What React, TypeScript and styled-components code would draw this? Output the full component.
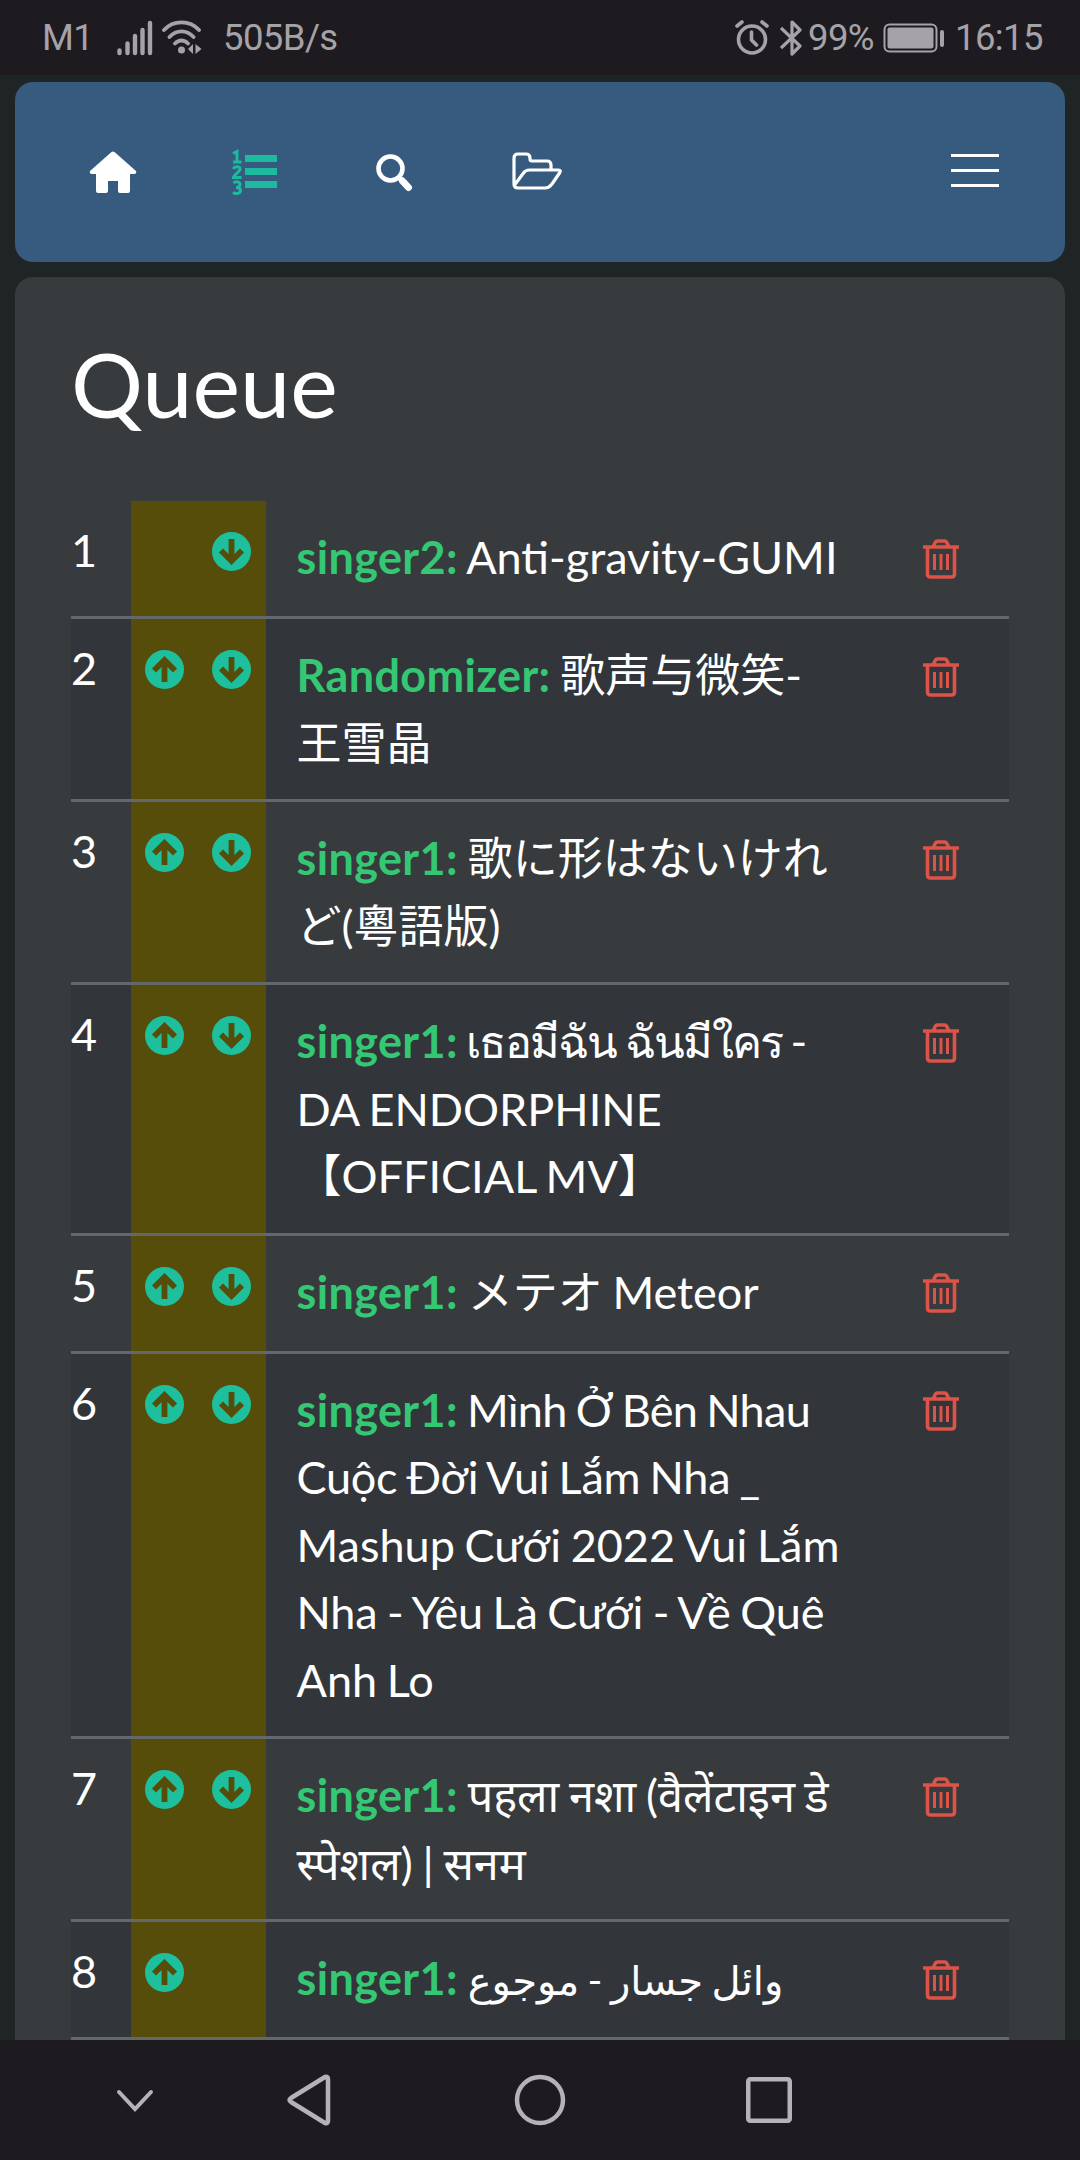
import React from "react";
import styled, { createGlobalStyle } from "styled-components";

const Global = createGlobalStyle`
  * { box-sizing: border-box; }
  html, body { margin: 0; background: #1f2425; }
`;

const Screen = styled.div`
  width: 1080px;
  height: 2160px;
  display: flex;
  flex-direction: column;
  overflow: hidden;
  background: #1f2425;
  color: #fff;
  font: 400 45px/67.5px Lato, "Noto Sans", "Noto Sans CJK JP", "DejaVu Sans", sans-serif;
  svg { display: block; flex: none; }
`;

const StatusBar = styled.header`
  height: 75px;
  flex: none;
  display: flex;
  justify-content: space-between;
  padding: 0 35px 0 42px;
  background: #1d1b20;
  color: #a5a3a8;
  font: 400 36.5px/75px Roboto, sans-serif;
  letter-spacing: -0.6px;
`;

const Group = styled.div`
  display: flex;
  align-items: center;
`;

const Label = styled.span<{ $left: number; $width: number }>`
  margin-left: ${(p) => p.$left}px;
  width: ${(p) => p.$width}px;
  white-space: nowrap;
`;

const Main = styled.main`
  flex: 1;
  min-height: 0;
  padding: 7px 15px 0;
  display: flex;
  flex-direction: column;
  gap: 15px;
`;

const Navbar = styled.nav`
  height: 180px;
  flex: none;
  display: flex;
  align-items: center;
  border-radius: 18px;
  padding: 0 66px 4px 74px;
  background: #375a7f;
`;

const NavItem = styled.a<{ $width: number; $drop: number; $active?: boolean }>`
  width: ${(p) => p.$width}px;
  padding-top: ${(p) => p.$drop * 2}px;
  color: ${(p) => (p.$active ? "#1dbaa0" : "#fff")};
`;

const Burger = styled.div`
  margin-left: auto;
  width: 48px;
  display: flex;
  flex-direction: column;
  gap: 12px;
`;

const BurgerLine = styled.span`
  height: 3px;
  background: #fff;
`;

const Panel = styled.section`
  flex: 1;
  min-height: 0;
  overflow: hidden;
  border-radius: 18px 18px 0 0;
  padding: 52px 56px 0;
  background: #373b3d;
`;

const Title = styled.h1`
  margin: 0 0 64px;
  font-size: 90px;
  font-weight: 400;
  line-height: 108px;
`;

const Row = styled.div<{ $striped: boolean }>`
  display: grid;
  grid-template-columns: 60px 135px 1fr 141px;
  min-height: 118px;
  border-bottom: 3px solid #63696b;
  background: ${(p) => (p.$striped ? "#32363a" : "transparent")};
`;

const Position = styled.div`
  padding: 16px 0 0;
`;

const Reorder = styled.div`
  display: grid;
  grid-template-columns: 67px 39px;
  align-content: start;
  padding: 31px 0 0 14px;
  background: #574d0a;
  color: #1dbf9c;
`;

const Song = styled.div`
  height: max-content;
  padding: 23px 0 22px 30.5px;
`;

const Line = styled.div<{ $tracking?: number }>`
  height: 67.5px;
  white-space: nowrap;
  word-spacing: -1.8px;
  letter-spacing: ${(p) => p.$tracking ?? 0}px;
`;

const Words = styled.span<{ $scale?: number }>`
  font-size: ${(p) => p.$scale ?? 1}em;
`;

const Singer = styled.b`
  color: #35c874;
  font-weight: 700;
  letter-spacing: 0.37px;
`;

const Remove = styled.div`
  padding: 37.5px 0 0 55px;
  color: #dd5347;
`;

const SystemNav = styled.footer`
  height: 120px;
  flex: none;
  display: flex;
  align-items: center;
  background: #1d1b20;
`;

const Signal = () => (
  <svg width="36" height="36" viewBox="0 0 36 36" stroke="currentColor" strokeWidth="4.4" strokeLinecap="round">
    <path d="M2.500 33v-2.500M10.500 33v-9.500M18 33v-17M25.500 33V10M33 33V3" />
  </svg>
);

const Wifi = () => (
  <svg width="40" height="36" viewBox="0 0 40 36" fill="none" stroke="currentColor" strokeWidth="3.8" strokeLinecap="round">
    <path d="M2 10C11-.3 28-.3 37 10M7.500 17c7-7.500 17-7.500 24 0M13 23.500c4-4 9-4 13 0" />
    <circle cx="19.500" cy="30" r="3.500" fill="currentColor" stroke="none" />
    <path d="M31 24v10l-5-5zM33.500 24v10l6-5z" fill="currentColor" stroke="none" />
  </svg>
);

const Alarm = () => (
  <svg width="34" height="36" viewBox="0 0 34 36" fill="none" stroke="currentColor" strokeWidth="3.6" strokeLinecap="round">
    <circle cx="17" cy="19.500" r="13.500" />
    <path d="M16.500 12v8l5 5M2 6l5-4M32 6l-5-4" />
  </svg>
);

const Bluetooth = () => (
  <svg width="22" height="36" viewBox="0 0 22 36" fill="none" stroke="currentColor" strokeWidth="3.2" strokeLinejoin="round">
    <path d="M1 8l19 18-8 8V2l8 8L1 28" />
  </svg>
);

const Battery = () => (
  <svg width="62" height="30" viewBox="0 0 62 30" fill="none" stroke="currentColor" strokeWidth="2">
    <rect x="1.500" y="1.500" width="52" height="27" rx="5" />
    <rect x="4.500" y="4.500" width="46" height="21" rx="2" fill="currentColor" stroke="none" />
    <rect x="57" y="7" width="4" height="17" rx="2" fill="currentColor" stroke="none" />
  </svg>
);

const Home = () => (
  <svg width="48" height="42" viewBox="0 0 48 42" fill="currentColor">
    <path d="M22.500 1q1.500-1 3 0L47 20q1 3-2 3h-4v17q0 2-2 2H31q-2 0-2-2V30H19v10q0 2-2 2H9q-2 0-2-2V23H3q-3 0-2-3z" />
  </svg>
);

const NumberedList = () => (
  <svg width="45" height="46" viewBox="0 0 45 46" fill="none" stroke="currentColor">
    <path d="M13 9.500h32M13 22.500h32M13 35.500h32" strokeWidth="7" />
    <path d="M1 4.500 5 2.500v11M1 13h8.500M1.500 20c1-3 6.500-3 6.500 0 0 3-6 5-6.500 8.500H9.500M1.500 34c2-2 6.500-1.500 6.500 1.500 0 2-2 3-4 3 3 0 4.500 1 4.500 3 0 3-5 4-7.500 2" strokeWidth="3" />
  </svg>
);

const Search = () => (
  <svg width="37" height="38" viewBox="0 0 37 38" fill="none" stroke="currentColor">
    <circle cx="14.500" cy="14.500" r="12" strokeWidth="4.600" />
    <path d="m23.500 24 9.500 9.500" strokeWidth="5" />
    <path d="m26.500 27 6 6.500" strokeWidth="7" strokeLinecap="round" />
  </svg>
);

const Folder = () => (
  <svg width="50" height="38" viewBox="0 0 50 38" fill="none" stroke="currentColor" strokeWidth="3.2" strokeLinejoin="round">
    <path d="M2 32V6q0-4 4-4h8q4 0 4 4v1q0 2 2 2h15q4 0 4 4v5M2.500 33l9-12q2-3 6-3h29q3 0 1 3L40 32q-3 4-7 4H6q-4 0-4-4" />
  </svg>
);

const Arrow = ({ down }: { down?: boolean }) => (
  <svg width="39" height="39" viewBox="0 0 39 39">
    <circle cx="19.500" cy="19.500" r="19.500" fill="currentColor" />
    <path
      transform={down ? "rotate(180 19.500 19.500)" : undefined}
      d="M19.500 32V11M9 20.500 19.500 10 30 20.500"
      fill="none"
      stroke="#574d0a"
      strokeWidth="5.800"
    />
  </svg>
);

const Trash = () => (
  <svg width="36" height="40" viewBox="0 0 36 40" fill="none" stroke="currentColor" strokeWidth="3.6" strokeLinejoin="round">
    <path d="M0 8h36M10 8l2.500-5q.5-1 2-1h7q1.500 0 2 1L26 8M4.500 8v27q0 3 3 3h21q3 0 3-3V8" />
    <path d="M11.500 15v16M18 15v16M24.500 15v16" strokeWidth="3" />
  </svg>
);

const Space = styled.span<{ $width: number }>`
  width: ${(p) => p.$width}px;
`;

type Entry = { singer: string; lines: string[]; lang?: string; tracking?: number[]; scale?: number };

const queue: Entry[] = [
  { singer: "singer2", lines: ["Anti-gravity-GUMI"] },
  { singer: "Randomizer", lines: ["歌声与微笑-", "王雪晶"], lang: "zh-CN" },
  { singer: "singer1", lines: ["歌に形はないけれ", "ど(粵語版)"], lang: "ja" },
  { singer: "singer1", lines: ["เธอมีฉัน ฉันมีใคร -", "DA ENDORPHINE", "【OFFICIAL MV】"], tracking: [-1.7] },
  { singer: "singer1", lines: ["メテオ Meteor"], lang: "ja" },
  {
    singer: "singer1",
    lines: ["Mình Ở Bên Nhau", "Cuộc Đời Vui Lắm Nha _", "Mashup Cưới 2022 Vui Lắm", "Nha - Yêu Là Cưới - Về Quê", "Anh Lo"],
    tracking: [-0.7, -0.3, 0, -0.15],
  },
  { singer: "singer1", lines: ["पहला नशा (वैलेंटाइन डे", "स्पेशल) | सनम"] },
  { singer: "singer1", lines: ["وائل جسار - موجوع"], scale: 0.89 },
];

export default function App() {
  return (
    <Screen>
      <Global />
      <StatusBar>
        <Group>
          <Label $left={0} $width={75}>M1</Label>
          <Signal />
          <Space $width={9} />
          <Wifi />
          <Label $left={21} $width={120}>505B/s</Label>
        </Group>
        <Group>
          <Alarm />
          <Space $width={11} />
          <Bluetooth />
          <Label $left={6} $width={75}>99%</Label>
          <Battery />
          <Label $left={10} $width={90}>16:15</Label>
        </Group>
      </StatusBar>
      <Main>
        <Navbar>
          <NavItem $width={143} $drop={2}><Home /></NavItem>
          <NavItem $width={144} $drop={2} $active><NumberedList /></NavItem>
          <NavItem $width={136} $drop={3}><Search /></NavItem>
          <NavItem $width={50} $drop={1}><Folder /></NavItem>
          <Burger>
            <BurgerLine />
            <BurgerLine />
            <BurgerLine />
          </Burger>
        </Navbar>
        <Panel>
          <Title>Queue</Title>
          {queue.map((entry, i) => (
            <Row key={i} $striped={i % 2 === 1}>
              <Position>{i + 1}</Position>
              <Reorder>
                {i > 0 ? <Arrow /> : <span />}
                {i < queue.length - 1 && <Arrow down />}
              </Reorder>
              <Song lang={entry.lang}>
                {entry.lines.map((line, n) => (
                  <Line key={n} $tracking={entry.tracking?.[n]}>
                    {n === 0 && <><Singer>{entry.singer}:</Singer> </>}
                    <Words $scale={entry.scale}>{line}</Words>
                  </Line>
                ))}
              </Song>
              <Remove><Trash /></Remove>
            </Row>
          ))}
        </Panel>
      </Main>
      <SystemNav>
        <Space $width={115} />
        <svg width="40" height="26" viewBox="0 0 40 26" fill="none" stroke="#b5b2b9" strokeWidth="4" strokeLinecap="round">
          <path d="m4 5 16 17L36 5" />
        </svg>
        <Space $width={130} />
        <svg width="48" height="54" viewBox="0 0 48 54" fill="none" stroke="#b5b2b9" strokeWidth="4.500" strokeLinejoin="round">
          <path d="M40 4q3-1 3 2v42q0 3-3 2L6 29q-3-2 0-4z" />
        </svg>
        <Space $width={181} />
        <svg width="52" height="52" viewBox="0 0 52 52" fill="none" stroke="#b5b2b9" strokeWidth="4.500">
          <circle cx="26" cy="26" r="23" />
        </svg>
        <Space $width={178} />
        <svg width="50" height="50" viewBox="0 0 50 50" fill="none" stroke="#b5b2b9" strokeWidth="4.500">
          <rect x="4.250" y="4.250" width="41.500" height="41.500" rx="2" />
        </svg>
      </SystemNav>
    </Screen>
  );
}
